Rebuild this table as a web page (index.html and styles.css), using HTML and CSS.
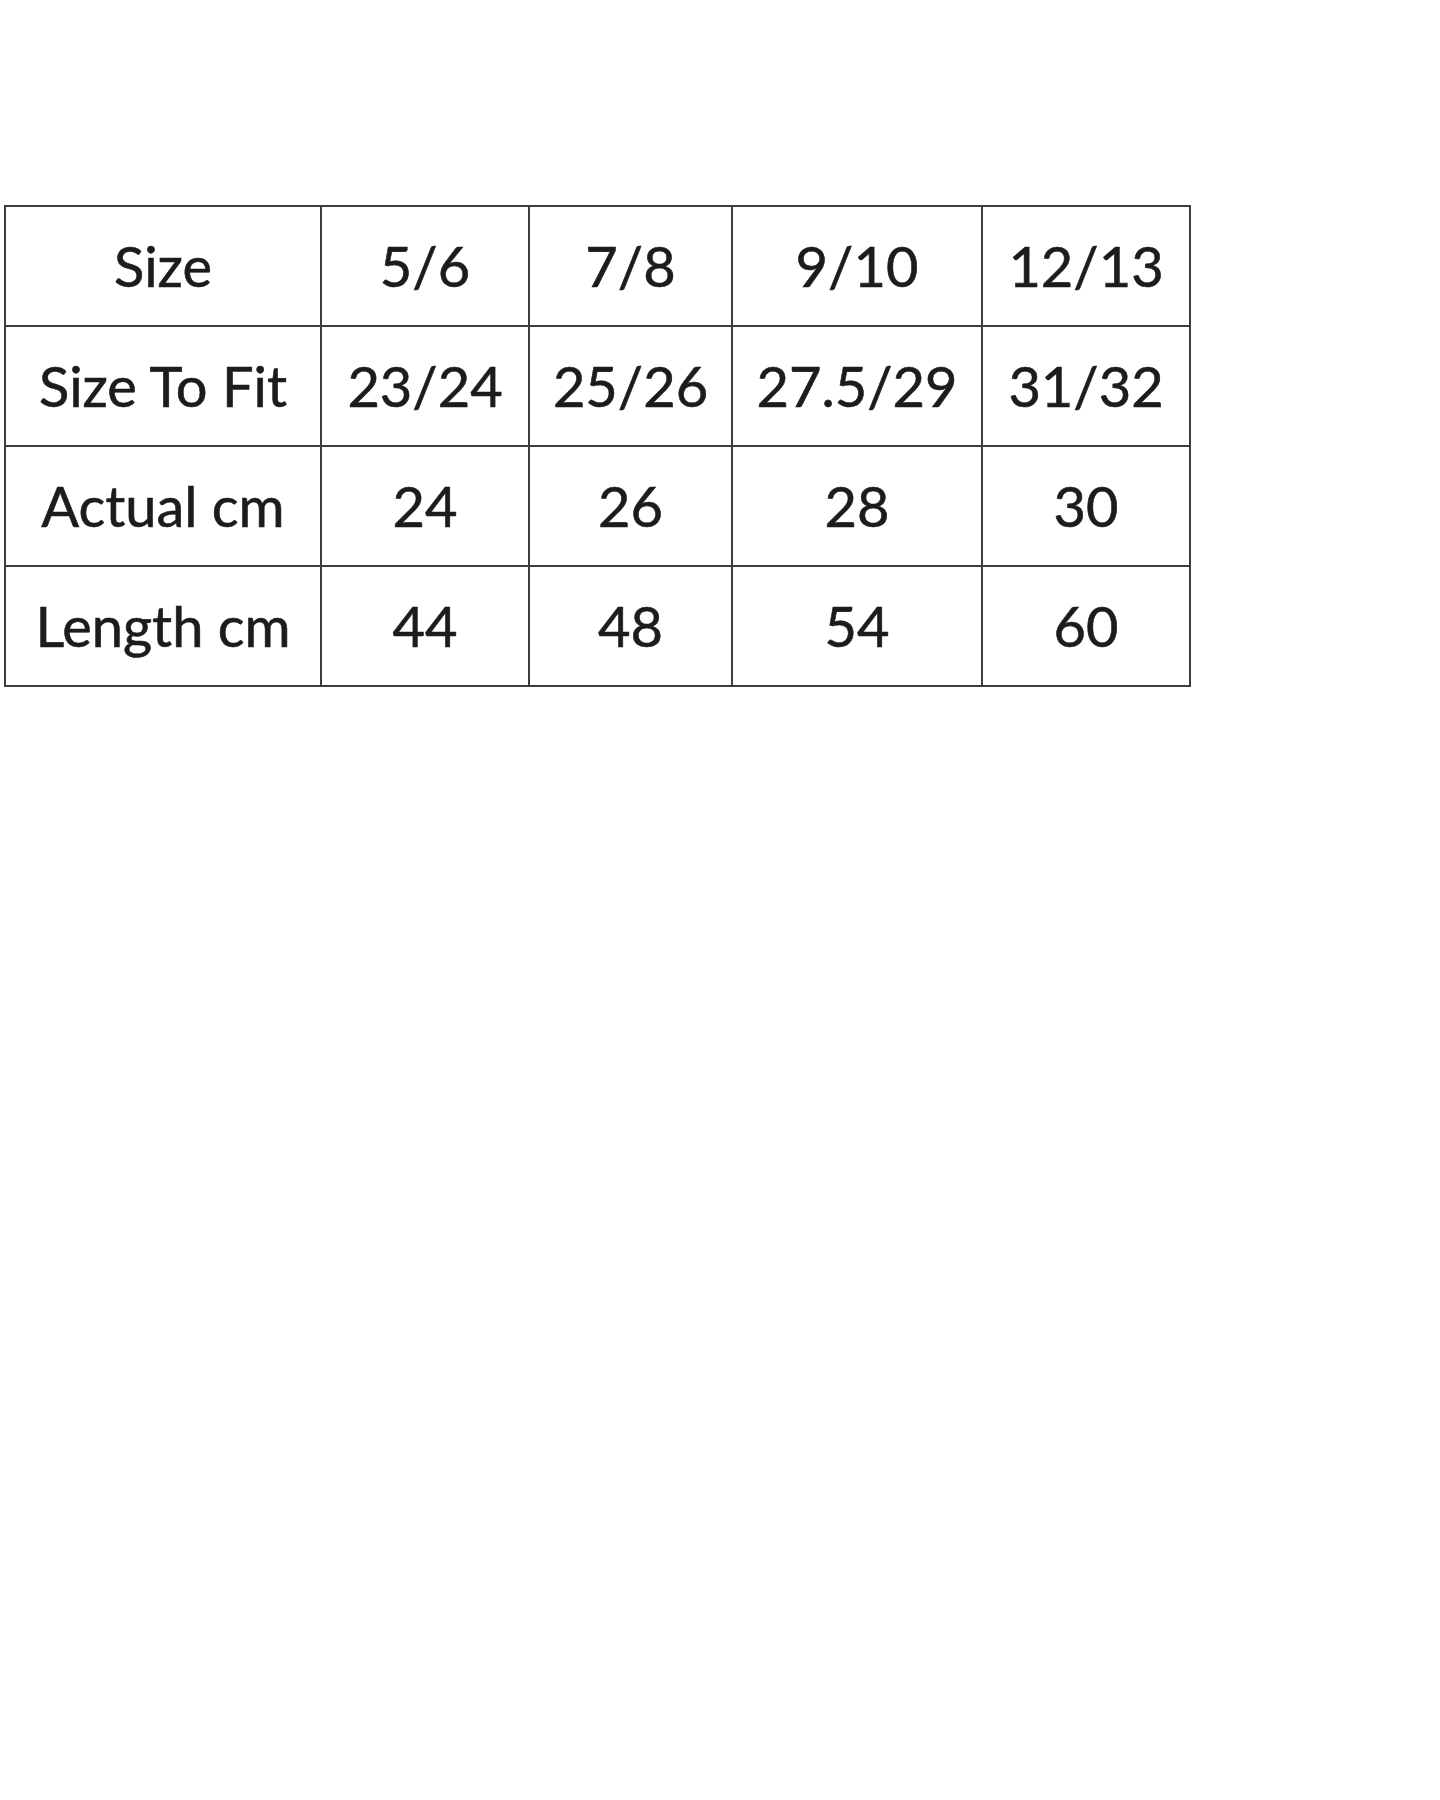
FILE: index.html
```html
<!DOCTYPE html>
<html lang="en">
<head>
<meta charset="utf-8">
<title>Size chart</title>
<link rel="stylesheet" href="styles.css">
</head>
<body>
<table class="size-chart">
  <colgroup>
    <col class="c-label">
    <col class="c-1">
    <col class="c-2">
    <col class="c-3">
    <col class="c-4">
  </colgroup>
  <tbody>
    <tr><td>Size</td><td>5/6</td><td>7/8</td><td>9/10</td><td>12/13</td></tr>
    <tr><td>Size To Fit</td><td>23/24</td><td>25/26</td><td>27.5/29</td><td>31/32</td></tr>
    <tr><td>Actual cm</td><td>24</td><td>26</td><td>28</td><td>30</td></tr>
    <tr><td>Length cm</td><td>44</td><td>48</td><td>54</td><td>60</td></tr>
  </tbody>
</table>
</body>
</html>
```

FILE: styles.css
```css
html, body {
  margin: 0;
  padding: 0;
  background: #ffffff;
}

body {
  width: 1440px;
  min-height: 1800px;
  font-family: Lato, "Open Sans", "Liberation Sans", sans-serif;
  color: #1c1c1c;
}

.size-chart {
  margin: 205px 0 0 4px;
  border-collapse: collapse;
  table-layout: fixed;
  width: 1187px;
}

.c-label { width: 316px; }
.c-1 { width: 208px; }
.c-2 { width: 203px; }
.c-3 { width: 250px; }
.c-4 { width: 208px; }

.size-chart td {
  border: 2px solid #3d3d3d;
  height: 118px;
  padding: 0;
  text-align: center;
  vertical-align: middle;
  font-size: 56px;
  font-weight: 400;
  line-height: 1;
  white-space: nowrap;
  -webkit-text-stroke: 0.6px #1c1c1c;
}
```
